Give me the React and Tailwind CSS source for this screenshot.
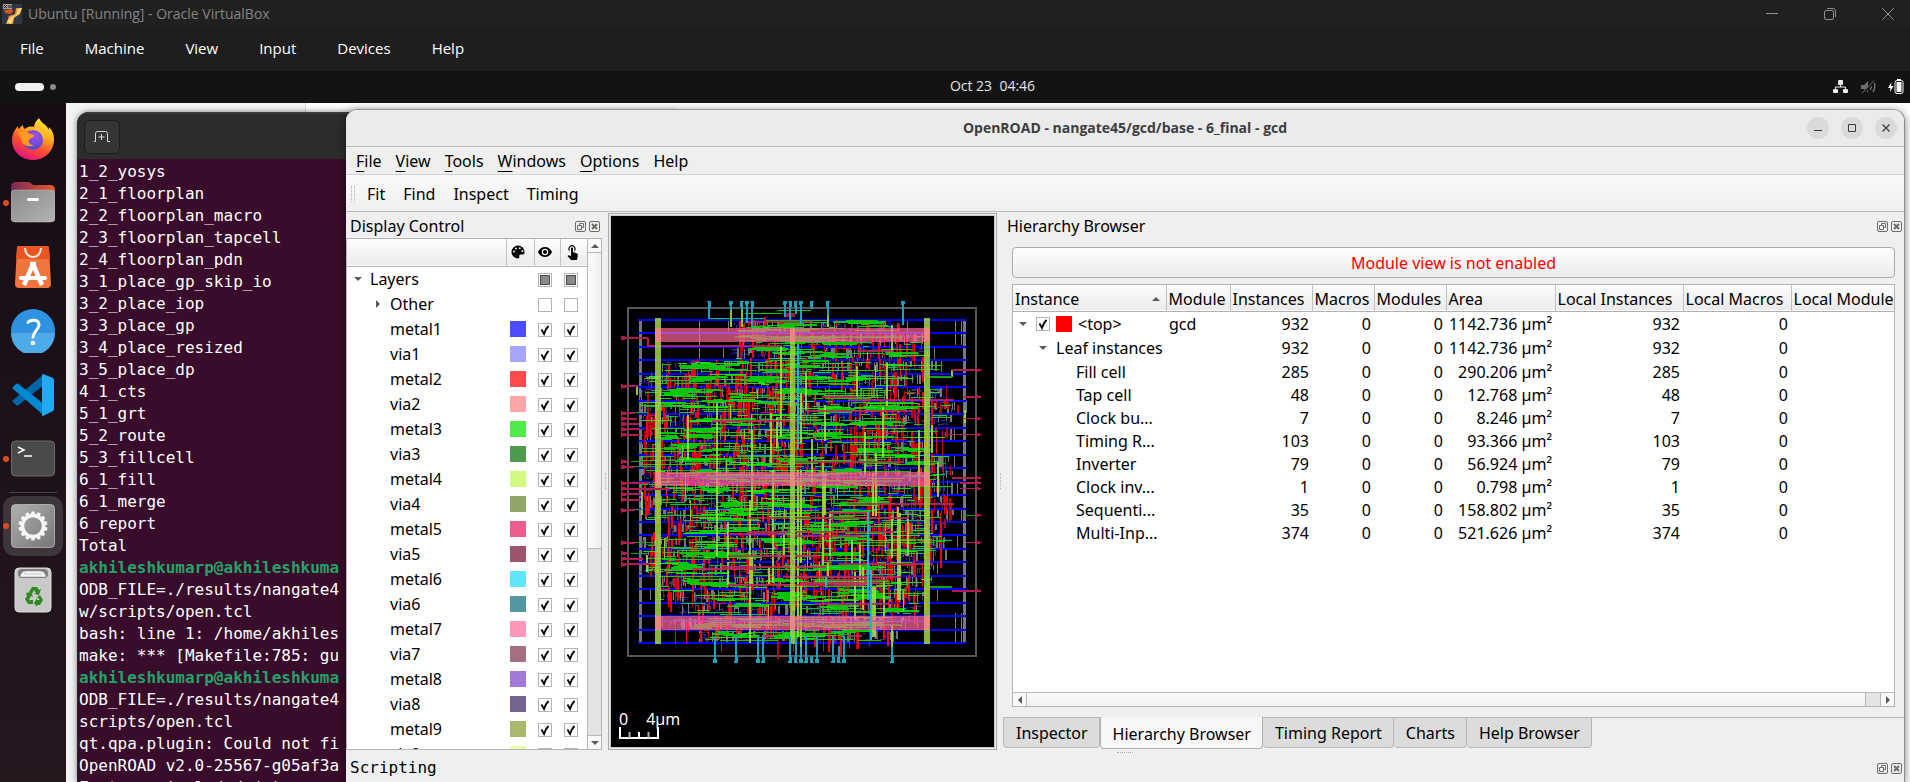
import React from "react";

const UI = "font-['Noto_Sans','Open_Sans',sans-serif]";
const MONO = "font-['DejaVu_Sans_Mono','Liberation_Mono',monospace]";

/* ---------- Chip layout drawing ---------- */

function rng(seed) {
  let a = seed;
  return () => {
    a = (a + 0x6d2b79f5) | 0;
    let t = Math.imul(a ^ (a >>> 15), 1 | a);
    t = (t + Math.imul(t ^ (t >>> 7), 61 | t)) ^ t;
    return ((t ^ (t >>> 14)) >>> 0) / 4294967296;
  };
}

const snap = (v) => Math.round(v / 3) * 3;
const box = (x, y, w, h) => `M${snap(x)} ${snap(y)}h${snap(w)}v${snap(h)}h${-snap(w)}z`;

const ROW_TOP = 327;
const ROW_STEP = 40.4;
const ROW_SPANS = [
  [400, 910], [405, 990], [385, 990], [185, 1030], [120, 960], [120, 1050], [120, 1085], [120, 1050],
  [120, 1050], [120, 1010], [120, 1050], [120, 1060], [120, 1060], [120, 1060], [120, 1070], [200, 1045],
  [120, 1060], [120, 1035], [120, 1000], [165, 1000], [165, 1000], [235, 970], [200, 940], [295, 890],
];

function buildLayers() {
  const r = rng(4510);
  const out = { navy: "", slate: "", gray: "", red: "", dimRed: "", green: "", lime: "", brightGreen: "" };
  ROW_SPANS.forEach(([a, b], i) => {
    const y = ROW_TOP + i * ROW_STEP;
    for (let k = 0; k < (b - a) / 8; k++) {
      const x = a + r() * (b - a - 20);
      const yy = y + 3 + r() * 30;
      out.navy += r() < 0.5 ? box(x, yy, 6 + r() * 18, 3) : box(x, yy, 3, 6 + r() * 15);
    }
    for (let k = 0; k < (b - a) / 9; k++) {
      const x = a + r() * (b - a - 20);
      const yy = y + 6 + r() * 26;
      out.slate += r() < 0.55 ? box(x, yy, 6 + r() * 15, 3) : box(x, yy, 3, 6 + r() * 12);
    }
    for (let k = 0; k < (b - a) / 17; k++) {
      out.gray += box(a + r() * (b - a), y + 3 + r() * 9, r() < 0.3 ? 6 : 3, 12 + r() * 24);
    }
    if (i % 2 === 0) {
      out.gray += box(b + 12, y + 3, 3, 36);
      out.gray += box(Math.max(120, a - 15), y + 3, 3, 34);
    }
    const dense = i > 2 && i < 21 ? 1 : 0.55;
    for (let k = 0; k < ((b - a) / 16) * dense; k++) {
      const x = a + 10 + r() * (b - a - 20);
      out[r() < 0.4 ? "dimRed" : "red"] += box(x, y - 8 + r() * 26, r() < 0.5 ? 6 : 3, 14 + r() * 66);
    }
    for (let k = 0; k < 3; k++) {
      out.red += box(a + r() * (b - a - 60), y + r() * 38, 12 + r() * 34, 3);
    }
    for (let k = 0; k < ((b - a) / 24) * dense; k++) {
      const w = 18 + r() * r() * 190;
      const x = a + r() * Math.max(10, b - a - w);
      out[r() < 0.7 ? "green" : "brightGreen"] += box(x, y + r() * 38, w, 3);
    }
    for (let k = 0; k < 5; k++) {
      const cx = a + 60 + r() * (b - a - 160);
      const cy = y + 4 + r() * 28;
      for (let j = 0; j < 4; j++) {
        out.green += box(cx - 35 + r() * 50, cy + (j - 1) * 3, 30 + r() * 75, r() < 0.6 ? 3 : 6);
      }
    }
    for (let k = 0; k < 3; k++) {
      const w = 80 + r() * 140;
      out.green += box(a + r() * (b - a - w), y + 6 + r() * 28, w, 3);
    }
    if (i > 1 && i < 22) {
      out.lime += box(a + 20 + r() * (b - a - 50), y + r() * 20, 3, 20 + r() * 70);
    }
  });
  return out;
}

const LAYERS = buildLayers();

const LIME_BARS = [
  [543, 408, 680], [850, 590, 740], [352, 580, 1040], [264, 615, 750], [457, 660, 900], [514, 610, 760],
  [530, 622, 715], [618, 485, 600], [772, 468, 560], [861, 460, 590], [877, 345, 425], [674, 585, 692],
  [603, 550, 700], [635, 688, 820], [795, 665, 790], [958, 660, 870], [997, 645, 728], [1013, 755, 860],
  [668, 750, 1065], [674, 790, 915], [820, 790, 920], [828, 730, 920], [520, 780, 1120], [450, 870, 1298],
  [595, 780, 1280], [691, 910, 1040], [385, 935, 1050], [553, 970, 1035], [603, 780, 1060], [756, 990, 1060],
  [781, 1000, 1130], [877, 918, 1045], [893, 890, 1170], [901, 910, 1170], [925, 925, 1040], [853, 1100, 1220],
  [765, 1085, 1230], [789, 1070, 1200], [820, 1130, 1280], [826, 1130, 1280], [683, 1060, 1100], [506, 1070, 1120],
  [385, 1055, 1125], [457, 1040, 1120], [393, 300, 350], [425, 300, 350], [683, 318, 352], [110, 530, 555],
  [126, 845, 915], [142, 1035, 1085], [1055, 480, 502], [1094, 600, 640], [877, 1245, 1310], [603, 1125, 1310],
];

const ROSE_BARS = [
  [145, 545, 408], [435, 640, 335], [770, 880, 423], [665, 770, 561], [745, 1062, 569], [618, 935, 602],
  [337, 603, 633], [563, 590, 714], [570, 910, 755], [740, 1060, 883], [680, 810, 908], [440, 925, 924],
  [440, 880, 965], [385, 560, 972], [385, 655, 1038], [715, 1000, 1062], [370, 680, 1070], [275, 465, 1077],
  [560, 780, 978], [550, 905, 1102], [680, 860, 1110], [385, 800, 1125], [600, 840, 1119], [645, 870, 1182],
  [490, 520, 1278], [740, 785, 1278],
];

const LEFT_PINS = [
  [383, 145], [528, 113], [609, 105], [625, 112], [641, 118], [657, 120], [673, 120], [754, 84], [770, 105],
  [819, 150], [835, 207], [852, 124], [868, 120], [900, 105], [997, 105], [1029, 84], [1045, 128], [1062, 148],
];
const RIGHT_PINS = [
  [480, 1055], [560, 1092], [625, 1092], [673, 1045], [803, 1055], [818, 1080], [835, 1080], [915, 1125],
  [997, 1098], [1142, 1055],
];
const TOP_PINS = [
  [328, 328], [393, 300], [425, 300], [441, 340], [457, 352], [555, 320], [571, 332], [587, 313], [603, 345],
  [635, 297], [683, 318], [909, 345],
];
const BOTTOM_PINS = [
  [345, 1278], [409, 1278], [474, 1278], [490, 1278], [571, 1278], [587, 1285], [603, 1312], [619, 1278],
  [635, 1338], [651, 1278], [700, 1278], [716, 1308], [732, 1278], [877, 1310],
];

function ChipLayout() {
  return (
    <svg
      viewBox="33 18 1149 1596"
      preserveAspectRatio="xMidYMin slice"
      shapeRendering="crispEdges"
      className="block h-full w-full"
      role="img"
      aria-label="gcd layout"
    >
      <rect x="84" y="294" width="1044" height="1044" fill="none" stroke="#585858" strokeWidth="4" />
      {[117, 1089].map((x) => (
        <path key={x} d={box(x, 330, 9, 966)} fill="#77777f" />
      ))}
      {[297, 1064, 1083].map((x, n) => (
        <path key={x} d={box(x, 333, 3, n === 0 ? 114 : 72) + box(x, 1210, 3, 86)} fill="#808080" />
      ))}
      <path d={LAYERS.navy} fill="#0a0a96" />
      <path d={LAYERS.slate} fill="#38386a" />
      <path d={LAYERS.gray} fill="#77777c" />
      {Array.from({ length: 25 }, (_, i) => (
        <path key={i} d={box(115, ROW_TOP + i * ROW_STEP, 984, 6)} fill="#0000ff" />
      ))}
      <path d={LAYERS.dimRed} fill="#b8000c" />
      <path d={LAYERS.red} fill="#f0000c" />
      <path d={LAYERS.green} fill="#05c305" />
      <path d={LAYERS.brightGreen} fill="#1fdc08" />
      <path d={box(435, 309, 110, 3) + box(535, 300, 100, 4) + box(328, 324, 165, 4) + box(700, 334, 160, 6)} fill="#00c800" />
      <path d={box(555, 309, 30, 12)} fill="#a01850" />
      <path d={LAYERS.lime} fill="#8cc83c" />
      <path d={LIME_BARS.map(([x, a, b]) => box(x - 3, a, 6, b - a)).join("")} fill="#a0e040" fillOpacity="0.88" />
      <path d={ROSE_BARS.map(([a, b, y]) => box(a, y - 3, b - a, 6)).join("")} fill="#c02858" fillOpacity="0.85" />
      <path d={box(142, 383, 5, 27)} fill="#c01858" />
      {[354, 786, 1218].map((y) => (
        <g key={y}>
          <rect x="165" y={y} width="825" height="42" fill="#ff6496" fillOpacity="0.7" />
          <rect x="165" y={y + 12} width="825" height="6" fill="#b050d0" fillOpacity="0.55" />
          <rect x="405" y={y + 24} width="500" height="5" fill="#a0a060" fillOpacity="0.55" />
        </g>
      ))}
      <path d={box(165, 324, 18, 978) + box(972, 324, 18, 978)} fill="#a4d846" fillOpacity="0.84" />
      <path d={box(570, 360, 15, 942)} fill="#a4d846" fillOpacity="0.8" />
      {[354, 786, 1218].map((y) => (
        <path key={y} d={box(165, y, 18, 42) + box(972, y, 18, 42) + box(570, y, 15, 42)} fill="#e88a80" />
      ))}
      <path
        d={box(592, 402, 7, 315) + box(802, 903, 6, 267) + box(811, 1080, 6, 210) + box(674, 1100, 6, 28)}
        fill="#22b4c8"
      />
      {TOP_PINS.map(([x, b]) => (
        <path key={x} d={`M${x - 6} 273h12l-3 21v${b - 294}h-6v${294 - b}z`} fill="#1ea0be" />
      ))}
      {BOTTOM_PINS.map(([x, a]) => (
        <path key={x} d={`M${x - 3} ${a}h6v${1338 - a}l3 20h-12l3 -20z`} fill="#1ea0be" />
      ))}
      {LEFT_PINS.map(([y, b]) => (
        <path key={y} d={`M63 ${y - 6}l18 4h${b - 81}v6h${81 - b}l-18 4z`} fill="#b01c50" />
      ))}
      {RIGHT_PINS.map(([y, a]) => (
        <path key={y} d={`M${a} ${y - 2}h${1127 - a}v-4l20 7l-20 6v-4h${a - 1127}z`} fill="#b01c50" />
      ))}
      <path d={box(105, 606, 40, 4) + box(105, 768, 60, 4) + box(93, 752, 30, 4) + box(105, 996, 60, 4) + box(93, 1028, 48, 4) + box(105, 898, 24, 4) + box(990, 498, 66, 5) + box(990, 1128, 66, 5) + box(1088, 915, 36, 4)} fill="#14a014" />
    </svg>
  );
}

/* ---------- Icons ---------- */

const FirefoxIcon = () => (
  <svg viewBox="0 0 44 44" className="size-11">
    <defs>
      <linearGradient id="ffBody" x1="0.8" y1="0" x2="0.3" y2="1">
        <stop offset="0" stopColor="#fff044" />
        <stop offset="0.35" stopColor="#ffb020" />
        <stop offset="0.65" stopColor="#ff5030" />
        <stop offset="1" stopColor="#e01080" />
      </linearGradient>
      <radialGradient id="ffCore" cx="0.6" cy="0.3" r="0.8">
        <stop offset="0" stopColor="#a050f0" />
        <stop offset="1" stopColor="#4548c8" />
      </radialGradient>
    </defs>
    <path
      d="M28 1c-3 3-5 6-5 9-4-1-7 0-9 2-2-1-2-3-2-4-2 1-3 3-4 4-1-1-1-2-1-3C3 13 1 18 1 23c0 11 9 20 21 20s21-9 21-21c0-5-2-9-5-12 0 1 0 2 0 3-2-5-8-7-10-12z"
      fill="url(#ffBody)"
    />
    <circle cx="22" cy="23" r="10" fill="url(#ffCore)" />
    <path d="M8 16c3-3 7-3 11 1 2 0 4 0 4 2-1 2-4 2-5 4-1 3 2 5 5 5-6 3-12 0-13-6-1-2-2-3-2-6z" fill="#ff9a20" />
    <path d="M23 12c5 0 9 4 10 9 1-5-2-9-5-11-2-1-4 0-5 2z" fill="#ffc22e" />
  </svg>
);

const FilesIcon = () => (
  <svg viewBox="0 0 44 44" className="size-11">
    <defs>
      <linearGradient id="fiBack" x1="0" x2="1">
        <stop offset="0" stopColor="#7a2a58" />
        <stop offset="1" stopColor="#e85a28" />
      </linearGradient>
      <linearGradient id="fiFront" x1="0" y1="0" x2="1" y2="1">
        <stop offset="0" stopColor="#8a8a8a" />
        <stop offset="1" stopColor="#b4b4b4" />
      </linearGradient>
    </defs>
    <path d="M0 14V6q0-5 5-5h12q2 0 4 2l1 1h17q5 0 5 5v8z" fill="url(#fiBack)" />
    <rect x="0" y="9" width="44" height="32" rx="4" fill="url(#fiFront)" stroke="#c0c0c0" strokeOpacity="0.5" />
    <rect x="16" y="17" width="12" height="3" rx="1.5" fill="#fff" />
  </svg>
);

const SoftwareIcon = () => (
  <svg viewBox="0 0 44 44" className="size-11">
    <path d="M8 1h28q2 0 2 2l2 36q0 4-4 4H8q-4 0-4-4L6 3q0-2 2-2z" fill="#f0743e" />
    <path d="M8 1h28q2 0 2 2l1 11H5L6 3q0-2 2-2z" fill="#e95420" />
    <path d="M14 3c0 12 16 12 16 0" fill="none" stroke="#fbe9e0" strokeWidth="2" />
    <path d="M22 19L13 40M22 19l9 21M19 19h6" fill="none" stroke="#fff" strokeWidth="4.500" />
    <path d="M10 33h24" stroke="#fff" strokeWidth="4" strokeLinecap="round" />
  </svg>
);

const HelpIcon = () => (
  <svg viewBox="0 0 44 44" className="size-11">
    <circle cx="22" cy="22" r="22" fill="#2f92e0" />
    <path d="M0 24h44a22 22 0 0 1-44 0z" fill="#4fabe8" />
    <path d="M17 13.500c2-3 11-4 11 2.500 0 5-6 6-6 12" fill="none" stroke="#fff" strokeWidth="3" strokeLinecap="round" />
    <circle cx="22" cy="34" r="2.300" fill="#fff" />
  </svg>
);

const CodeIcon = () => (
  <svg viewBox="0 0 44 44" className="size-11">
    <path d="M1 28l4 4q1 1 2.500 0L33 12V1L1 28z" fill="#0065a9" />
    <path d="M1 15l4-4q1-1 2.500 0L33 31v11.500L1 15z" fill="#0088d4" />
    <path d="M32 1l10 4q1 1 1 2v29q0 1-1 2l-10 5q-1 0-1-1V2z" fill="#24a8f4" />
  </svg>
);

const TerminalIcon = () => (
  <svg viewBox="0 0 44 44" className="size-11">
    <rect x="0.500" y="4" width="43" height="35" rx="4" fill="#4a4a4a" stroke="#6a6a6a" />
    <path d="M7 10l6 3-6 3M13 19h8" fill="none" stroke="#fff" strokeWidth="1.500" />
  </svg>
);

const SettingsIcon = () => (
  <svg viewBox="0 0 44 44" className="size-11">
    <defs>
      <linearGradient id="seBg" x1="0" y1="0" x2="1" y2="1">
        <stop offset="0" stopColor="#b0b0b0" />
        <stop offset="1" stopColor="#757575" />
      </linearGradient>
    </defs>
    <rect x="0.500" y="0.500" width="43" height="43" rx="4" fill="url(#seBg)" stroke="#c8c8c8" strokeOpacity="0.7" />
    <circle cx="22" cy="22" r="10.500" fill="none" stroke="#f6f6f6" strokeWidth="3.500" />
    {Array.from({ length: 14 }, (_, i) => (
      <path key={i} d="M20.500 7.500h3l1 4h-5z" fill="#f6f6f6" transform={`rotate(${(i * 360) / 14} 22 22)`} />
    ))}
  </svg>
);

const TrashIcon = () => (
  <svg viewBox="0 0 44 46" className="h-[46px] w-11">
    <rect x="4" y="1" width="36" height="44" rx="4" fill="#c9c9c9" stroke="#dcdcdc" />
    <rect x="7" y="2" width="30" height="9" rx="4" fill="#7d7d7d" />
    <path d="M9 10q1-6 6-6h14q5 0 6 6z" fill="#f4f4f4" stroke="#9a9a9a" strokeWidth="0.600" />
    <path d="M13 7h18" stroke="#aaa" strokeWidth="0.600" />
    <g fill="#2d8a1e">
      <path d="M18 25l3-5h5l2 3 2-1-2 6-5-1 2-1-2-3-2 4z" />
      <path d="M15 26l5-1 2 5-2-1-2 4h4v4h-5l-3-5 2-3z" />
      <path d="M29 28l3 5-3 5h-3v2l-3-4 3-5v2h3l-3-3z" />
    </g>
  </svg>
);

const NewTabIcon = () => (
  <svg viewBox="0 0 16 13" className="h-[13px] w-4" fill="none" stroke="#d8d8d8">
    <path d="M0 11.500h1.500V3.500q0-2 2-2h8q2 0 2 2v8H16M7.500 4v6M4.500 7h6" />
  </svg>
);

const FloatIcon = () => (
  <svg viewBox="0 0 11 11" className="size-[11px]" fill="none" stroke="#6c6c68">
    <rect x="0.500" y="0.500" width="10" height="10" rx="1.500" />
    <path d="M4.500 4V2.500h4v4H7M2.500 4.500h4v4h-4z" />
  </svg>
);

const CloseDockIcon = () => (
  <svg viewBox="0 0 11 11" className="size-[11px]" fill="none" stroke="#6c6c68">
    <rect x="0.500" y="0.500" width="10" height="10" rx="1.500" />
    <path d="M3 3l5 5M8 3l-5 5" strokeWidth="2" />
  </svg>
);

const Arrow = ({ dir }) => {
  const d = { down: "M0 2h8l-4 4z", up: "M0 6h8l-4-4z", left: "M6 0v8l-4-4z", right: "M2 0v8l4-4z" }[dir];
  return (
    <svg viewBox="0 0 8 8" className="size-2" fill="#5a5a5a">
      <path d={d} />
    </svg>
  );
};

/* ---------- Small controls ---------- */

function Check({ label, state = "on" }) {
  return (
    <span className="relative inline-grid size-3.5 place-items-center align-middle">
      <input
        type="checkbox"
        aria-label={label}
        defaultChecked={state === "on"}
        className="peer absolute inset-0 m-0 size-3.5 appearance-none border border-[#b4b4b4] bg-white"
      />
      {state === "partial" ? (
        <span className="pointer-events-none relative size-2.5 border border-[#4a4a4a] bg-[#8a8a8a]" />
      ) : (
        <svg
          viewBox="0 0 14 14"
          className="pointer-events-none invisible relative size-3.5 peer-checked:visible"
          fill="none"
          stroke="#000"
          strokeWidth="1.800"
        >
          <path d="M3.500 6.500l2.500 4.500q1.500-5 4.500-8" />
        </svg>
      )}
    </span>
  );
}

function DockTitle({ children }) {
  return (
    <div className="flex h-[26px] items-center justify-between pt-0.5 pr-0.5 pl-1">
      <h2>{children}</h2>
      <div className="flex gap-[3px]">
        <button type="button" aria-label="Float panel"><FloatIcon /></button>
        <button type="button" aria-label="Close panel"><CloseDockIcon /></button>
      </div>
    </div>
  );
}

const LayerRows = [
  ["metal1", "bg-[#4b4bff]"], ["via1", "bg-[#a5a5ff]"], ["metal2", "bg-[#ff4b4b]"], ["via2", "bg-[#ffa5a5]"],
  ["metal3", "bg-[#50eb4b]"], ["via3", "bg-[#4f9b4e]"], ["metal4", "bg-[#d2fa82]"], ["via4", "bg-[#90a466]"],
  ["metal5", "bg-[#e9608f]"], ["via5", "bg-[#9b566b]"], ["metal6", "bg-[#62e4ff]"], ["via6", "bg-[#5596a2]"],
  ["metal7", "bg-[#ff96bb]"], ["via7", "bg-[#a47080]"], ["metal8", "bg-[#a078d7]"], ["via8", "bg-[#756491]"],
  ["metal9", "bg-[#a7b96e]"], ["via9", "bg-[#e8ffaa]"],
];

function DisplayControl() {
  return (
    <section className="flex w-64 shrink-0 flex-col">
      <DockTitle>Display Control</DockTitle>
      <div className="flex min-h-0 flex-1 overflow-hidden border border-[#b4b4b4] bg-white">
        <div className="min-h-0 flex-1 overflow-hidden">
          <table className="w-full table-fixed border-collapse">
            <colgroup>
              <col />
              <col className="w-7" />
              <col className="w-[26px]" />
              <col className="w-[27px]" />
            </colgroup>
            <thead>
              <tr className="h-[27px] border-b border-[#b0b0b0] bg-linear-to-b from-[#fdfdfd] to-[#ebebeb]">
                <th scope="col" aria-label="Name" />
                <th scope="col" aria-label="Color" className="border-l border-[#c4c4c4]">
                  <svg viewBox="0 0 14 14" className="mx-auto block size-3.5 -translate-x-0.5">
                    <path d="M7 0.500a6.500 6.500 0 1 0 0 13c1.200 0 1.600-.8 1.300-1.700-.5-1.300.2-2.300 1.600-2.300H12c1 0 1.600-.8 1.600-2C13.600 3.500 10.600.5 7 .5z" />
                    <g fill="#f4f4f4"><circle cx="3" cy="6.500" r="1" /><circle cx="5" cy="3.500" r="1" /><circle cx="8.800" cy="3.300" r="1" /><circle cx="11.300" cy="6" r="1" /></g>
                  </svg>
                </th>
                <th scope="col" aria-label="Visible" className="border-l border-[#c4c4c4]">
                  <svg viewBox="0 0 14 10" className="mx-auto block h-2.5 w-3.5 -translate-x-0.5">
                    <path d="M7 0C3.800 0 1.200 2 0 5c1.200 3 3.800 5 7 5s5.800-2 7-5c-1.200-3-3.800-5-7-5z" />
                    <circle cx="7" cy="5" r="3.300" fill="#f4f4f4" /><circle cx="7" cy="5" r="2" />
                  </svg>
                </th>
                <th scope="col" aria-label="Selectable" className="border-l border-[#c4c4c4]">
                  <svg viewBox="0 0 12 15" className="mx-auto block h-[15px] w-3 -translate-x-0.5">
                    <path d="M5 6V3.500q0-1 1-1t1 1V7l4 1.500q1 .4.800 1.500L11 15H5L1.500 11l.8-.8L5 11z" />
                    <path d="M3.500 5.500a3 3 0 1 1 5 0" fill="none" stroke="#000" strokeWidth="1.200" />
                  </svg>
                </th>
              </tr>
            </thead>
            <tbody>
              <tr className="h-[25px]">
                <th scope="row" className="p-0 font-normal">
                  <span className="flex items-center gap-2 pl-[7px]"><Arrow dir="down" />Layers</span>
                </th>
                <td />
                <td className="p-0 pl-1 leading-none"><Check label="Layers visible" state="partial" /></td>
                <td className="p-0 pl-1 leading-none"><Check label="Layers selectable" state="partial" /></td>
              </tr>
              <tr className="h-[25px]">
                <th scope="row" className="p-0 font-normal">
                  <span className="flex items-center gap-2 pl-[27px]"><Arrow dir="right" />Other</span>
                </th>
                <td />
                <td className="p-0 pl-1 leading-none"><Check label="Other visible" state="off" /></td>
                <td className="p-0 pl-1 leading-none"><Check label="Other selectable" state="off" /></td>
              </tr>
              {LayerRows.map(([name, color]) => (
                <tr key={name} className="h-[25px]">
                  <th scope="row" className="p-0 pl-[43px] text-left font-normal">{name}</th>
                  <td className="p-0 pl-1"><span className={`block size-4 ${color}`} /></td>
                  <td className="p-0 pl-1 leading-none"><Check label={`${name} visible`} /></td>
                  <td className="p-0 pl-1 leading-none"><Check label={`${name} selectable`} /></td>
                </tr>
              ))}
            </tbody>
          </table>
        </div>
        <div className="flex w-3.5 flex-col border-l border-[#b8b8b8] bg-[#e4e4e4]">
          <button type="button" aria-label="Scroll up" className="grid h-3.5 shrink-0 place-items-center border-b border-[#b8b8b8] bg-[#f8f8f8]"><Arrow dir="up" /></button>
          <div className="h-[58%] border-b border-[#b8b8b8] bg-linear-to-r from-[#fcfcfc] to-[#f0f0f0]" />
          <div className="flex-1" />
          <button type="button" aria-label="Scroll down" className="grid h-3.5 shrink-0 place-items-center border-t border-[#b8b8b8] bg-[#f8f8f8]"><Arrow dir="down" /></button>
        </div>
      </div>
    </section>
  );
}

const Columns = ["Instance", "Module", "Instances", "Macros", "Modules", "Area", "Local Instances", "Local Macros", "Local Modules"];
const LeafRows = [
  ["Fill cell", 285, "290.206"], ["Tap cell", 48, "12.768"], ["Clock bu...", 7, "8.246"], ["Timing R...", 103, "93.366"],
  ["Inverter", 79, "56.924"], ["Clock inv...", 1, "0.798"], ["Sequenti...", 35, "158.802"], ["Multi-Inp...", 374, "521.626"],
];

function Numbers({ count, area }) {
  return (
    <>
      {[count, 0, 0, `${area} µm²`, count, 0].map((v, i) => (
        <td key={i} className="p-0 pr-[3px] text-right whitespace-nowrap">{v}</td>
      ))}
      <td />
    </>
  );
}

function HierarchyBrowser() {
  return (
    <section className="flex min-w-0 flex-1 flex-col">
      <DockTitle>Hierarchy Browser</DockTitle>
      <div className="flex min-h-0 flex-1 flex-col gap-1.5 px-[9px] pt-[9px] pb-2.5">
        <button type="button" className="h-[31px] shrink-0 rounded-sm border border-[#adadad] bg-linear-to-b from-[#fefefe] to-[#ebebeb] text-[#ff0000]">
          Module view is not enabled
        </button>
        <div className="flex min-h-0 flex-1 flex-col overflow-hidden border border-[#b4b4b4] bg-white">
          <div className="min-h-0 flex-1 overflow-hidden">
            <table className="w-[898px] min-w-full table-fixed border-collapse">
              <colgroup>
                <col className="w-[153px]" />
                <col className="w-16" />
                <col className="w-[82px]" />
                <col className="w-[62px]" />
                <col className="w-[72px]" />
                <col className="w-[109px]" />
                <col className="w-32" />
                <col className="w-[108px]" />
                <col className="w-[120px]" />
              </colgroup>
              <thead>
                <tr className="h-[26px] border-b border-[#b0b0b0] bg-linear-to-b from-[#fdfdfd] to-[#ebebeb]">
                  {Columns.map((c, i) => (
                    <th key={c} scope="col" className="border-r border-[#c0c0c0] p-0 pt-0.5 pl-0.5 text-left font-normal whitespace-nowrap">
                      {i === 0 ? <span className="flex items-center justify-between pr-1.5">{c}<Arrow dir="up" /></span> : c}
                    </th>
                  ))}
                </tr>
              </thead>
              <tbody>
                <tr className="h-[25px]">
                  <th scope="row" className="p-0 font-normal">
                    <span className="flex items-center pl-1.5">
                      <Arrow dir="down" />
                      <label className="ml-[9px] flex items-center gap-1.5">
                        <Check label="<top>" />
                        <span className="size-4 bg-[#ff0000]" />
                        {"<top>"}
                      </label>
                    </span>
                  </th>
                  <td className="p-0 pl-[3px]">gcd</td>
                  <Numbers count={932} area="1142.736" />
                </tr>
                <tr className="h-6">
                  <th scope="row" className="p-0 font-normal whitespace-nowrap">
                    <span className="flex items-center gap-[9px] pl-[26px]"><Arrow dir="down" />Leaf instances</span>
                  </th>
                  <td />
                  <Numbers count={932} area="1142.736" />
                </tr>
                {LeafRows.map(([name, count, area]) => (
                  <tr key={name} className="h-[23px]">
                    <th scope="row" className="p-0 pl-[63px] text-left font-normal whitespace-nowrap">{name}</th>
                    <td />
                    <Numbers count={count} area={area} />
                  </tr>
                ))}
              </tbody>
            </table>
          </div>
          <div className="flex h-3.5 shrink-0 border-t border-[#b8b8b8] bg-[#e4e4e4]">
            <button type="button" aria-label="Scroll left" className="grid w-3.5 place-items-center border-r border-[#b8b8b8] bg-[#f8f8f8]"><Arrow dir="left" /></button>
            <div className="mr-3.5 flex-1 border-r border-[#b8b8b8] bg-linear-to-b from-[#fcfcfc] to-[#f0f0f0]" />
            <button type="button" aria-label="Scroll right" className="grid w-3.5 place-items-center border-l border-[#b8b8b8] bg-[#f8f8f8]"><Arrow dir="right" /></button>
          </div>
        </div>
      </div>
      <div className="flex h-[33px] shrink-0 items-start">
        {["Inspector", "Hierarchy Browser", "Timing Report", "Charts", "Help Browser"].map((t) =>
          t === "Hierarchy Browser" ? (
            <button key={t} type="button" className="h-8 rounded-b-sm border border-t-0 border-[#b0b0b0] bg-[#f7f7f7] pt-0.5 pr-[11px] pl-3">{t}</button>
          ) : (
            <button key={t} type="button" className="h-[31px] rounded-b-sm border border-l-0 border-[#b8b8b8] bg-[#dcdcdc] pr-[11px] pl-3 first:border-l">{t}</button>
          )
        )}
        <div className="flex-1 border-t border-[#b8b8b8]" />
      </div>
    </section>
  );
}

const Grip = ({ className }) => <span className={`block border-[#b0b0b0] ${className}`} />;

function OpenRoadWindow() {
  return (
    <div className={`absolute top-1.5 right-[5px] bottom-0 left-[280px] flex flex-col overflow-hidden rounded-t-xl border-t border-r border-t-[#9a9a9a] border-r-[#8c8c8c] bg-[#efefef] text-base leading-[22px] text-black shadow-[0_2px_10px_rgba(0,0,0,0.5)] ${UI}`}>
      <div className="grid h-[37px] shrink-0 grid-cols-[1fr_auto_1fr] items-center border-b border-[#bcbcbc] bg-[#ebebeb]">
        <span />
        <h1 className="font-['Open_Sans','Noto_Sans',sans-serif] text-sm font-bold text-[#3d3d3d]">OpenROAD - nangate45/gcd/base - 6_final - gcd</h1>
        <div className="flex justify-end gap-3 pr-[7px]">
          <button type="button" aria-label="Minimize" className="grid size-[22px] place-items-center rounded-full bg-[#dadada]">
            <svg viewBox="0 0 8 8" className="size-2" stroke="#3d3d3d" fill="none"><path d="M0 6.500h8" /></svg>
          </button>
          <button type="button" aria-label="Maximize" className="grid size-[22px] place-items-center rounded-full bg-[#dadada]">
            <svg viewBox="0 0 8 8" className="size-2" stroke="#3d3d3d" fill="none"><path d="M.5.5h7v7h-7z" /></svg>
          </button>
          <button type="button" aria-label="Close" className="grid size-[22px] place-items-center rounded-full bg-[#dadada]">
            <svg viewBox="0 0 8 8" className="size-2" stroke="#3d3d3d" strokeWidth="1.300" fill="none"><path d="M.5.5l7 7M7.500.5l-7 7" /></svg>
          </button>
        </div>
      </div>
      <nav className="flex h-7 shrink-0 items-center gap-[14px] border-b border-[#d2d2d2] px-2.5">
        {["File", "View", "Tools", "Windows", "Options", "Help"].map((m) => (
          <button key={m} type="button">
            {m === "Help" ? m : <><span className="underline underline-offset-4">{m[0]}</span>{m.slice(1)}</>}
          </button>
        ))}
      </nav>
      <div className="flex h-[37px] shrink-0 items-center gap-[18px] border-b border-[#b8b8b8] bg-linear-to-b from-[#fafafa] to-[#efefef] pt-0.5 pl-[5px]">
        <Grip className="-mr-1.5 h-4 w-1 border-x border-dotted" />
        {["Fit", "Find", "Inspect", "Timing"].map((m) => (
          <button key={m} type="button">{m}</button>
        ))}
      </div>
      <div className="flex min-h-0 flex-1">
        <DisplayControl />
        <div className="grid w-1.5 shrink-0 place-items-center"><Grip className="h-4 w-px border-l border-dotted" /></div>
        <div className="relative mt-px w-[389px] shrink-0 border border-[#a8a8a8] bg-[#efefef] p-px">
          <div className="relative h-full border border-[#c8c8c8] bg-black">
            <div className="absolute inset-0"><ChipLayout /></div>
            <div className="absolute bottom-2 left-2 text-white">
              <div className="flex gap-[18px] leading-4"><span>0</span><span>4µm</span></div>
              <svg viewBox="0 0 40 12" className="block h-3 w-10" fill="none" stroke="#fff" strokeWidth="2">
                <path d="M1 0v11h38V0M20 5v6" />
                <path d="M10.500 5v6M29.500 5v6" stroke="#b0b0b0" />
              </svg>
            </div>
          </div>
        </div>
        <div className="grid w-1.5 shrink-0 place-items-center"><Grip className="h-4 w-px border-l border-dotted" /></div>
        <HierarchyBrowser />
      </div>
      <div className="grid h-1 shrink-0 place-items-center"><Grip className="h-px w-4 border-t border-dotted" /></div>
      <div className={`h-7 shrink-0 ${MONO}`}>
        <DockTitle>Scripting</DockTitle>
      </div>
    </div>
  );
}

const Prompt = "akhileshkumarp@akhileshkuma";
const TermLines = [
  "1_2_yosys", "2_1_floorplan", "2_2_floorplan_macro", "2_3_floorplan_tapcell", "2_4_floorplan_pdn",
  "3_1_place_gp_skip_io", "3_2_place_iop", "3_3_place_gp", "3_4_place_resized", "3_5_place_dp", "4_1_cts",
  "5_1_grt", "5_2_route", "5_3_fillcell", "6_1_fill", "6_1_merge", "6_report", "Total", Prompt,
  "ODB_FILE=./results/nangate4", "w/scripts/open.tcl", "bash: line 1: /home/akhiles", "make: *** [Makefile:785: gu",
  Prompt, "ODB_FILE=./results/nangate4", "scripts/open.tcl", "qt.qpa.plugin: Could not fi",
  "OpenROAD v2.0-25567-g05af3a", "Features included (+)",
];

function TerminalWindow() {
  return (
    <div className="absolute top-[9px] bottom-0 left-[11px] flex w-[600px] flex-col overflow-hidden rounded-tl-xl bg-[#380c2a] shadow-[0_0_6px_rgba(0,0,0,0.5)]">
      <div className="flex h-[47px] shrink-0 items-center border-t-2 border-[#3a3a3a] bg-[#2c2c2c] pl-[7px]">
        <button type="button" aria-label="New tab" className="grid h-[34px] w-9 place-items-center rounded-md border border-[#1c1c1c] bg-[#353535]"><NewTabIcon /></button>
      </div>
      <div className={`flex-1 overflow-hidden border-l border-[#2a2028] pt-0.5 pl-px text-base leading-[22px] whitespace-pre text-white ${MONO}`}>
        {TermLines.map((l, i) => (
          <div key={i} className={l === Prompt ? "font-bold text-[#26a269]" : ""}>{l}</div>
        ))}
      </div>
    </div>
  );
}

const DockItems = [
  ["Firefox", FirefoxIcon, false], ["Files", FilesIcon, true], ["App Center", SoftwareIcon, false],
  ["Help", HelpIcon, false], ["Visual Studio Code", CodeIcon, false], ["Terminal", TerminalIcon, true],
];

function DockButton({ name, Icon, running, active }) {
  return (
    <button type="button" aria-label={name} className="relative grid h-16 w-full shrink-0 place-items-center">
      {active && <span className="absolute inset-x-[3px] inset-y-0.5 rounded-xl bg-[#3d363d]" />}
      {running && <span className="absolute top-[29px] left-[3px] size-1.5 rounded-full bg-[#dc4a1c]" />}
      <span className="relative"><Icon /></span>
    </button>
  );
}

export default function App() {
  return (
    <div className="flex h-screen flex-col overflow-hidden bg-[#202020]">
      <header className="shrink-0 bg-[#202020] font-['Open_Sans','Noto_Sans',sans-serif]">
        <div className="flex h-7 items-center justify-between pr-4 pl-0.5">
          <div className="flex items-center gap-1.5">
            <svg viewBox="0 0 20 20" className="size-5">
              <rect width="20" height="20" fill="#2e3648" />
              <path d="M4 20l3-8 6-2 1-6h6l-2 6-6 4-1 6z" fill="#f59a2c" />
              <path d="M5 18l4-5 5-2 2-6 4-1-3 6-5 3-3 7z" fill="#ffd98a" />
              <path d="M2 6l8-1 1 3-3 2-5-1z" fill="#d8541c" />
              <path d="M1 0h9v5H1z" fill="#9a9a9a" />
              <path d="M2 1l3 3M5 1L2 4M7 1v3M9 1v3" stroke="#222" />
            </svg>
            <span className="text-sm text-[#848484]">Ubuntu [Running] - Oracle VirtualBox</span>
          </div>
          <div className="flex items-center gap-[46px]">
            <button type="button" aria-label="Minimize window"><svg viewBox="0 0 12 12" className="size-3" stroke="#8c8c8c" fill="none"><path d="M0 5.500h12" /></svg></button>
            <button type="button" aria-label="Restore window"><svg viewBox="0 0 12 12" className="size-3" stroke="#8c8c8c" fill="none"><rect x=".5" y="2.500" width="9" height="9" rx="1.500" /><path d="M3 .5h6q2.500 0 2.500 2.500v6" /></svg></button>
            <button type="button" aria-label="Close window"><svg viewBox="0 0 12 12" className="size-3" stroke="#8c8c8c" fill="none"><path d="M0 0l12 12M12 0L0 12" /></svg></button>
          </div>
        </div>
        <nav className="flex h-[43px] items-center gap-[41px] bg-[#1e1e1e] px-5 pb-0.5 text-[15px] text-white">
          {["File", "Machine", "View", "Input", "Devices", "Help"].map((m) => (
            <button key={m} type="button">{m}</button>
          ))}
        </nav>
      </header>

      <div className="grid h-8 shrink-0 grid-cols-[1fr_auto_1fr] items-center bg-[#131313] pr-1.5 pl-[15px] text-[#e4e4e4]">
        <div className="flex items-center gap-1.5">
          <span className="h-2 w-[29px] rounded-full bg-[#f2f2f2]" />
          <span className="size-1.5 rounded-full bg-[#8a8a8a]" />
        </div>
        <time className="pb-0.5 pl-[66px] font-['Open_Sans','Noto_Sans',sans-serif] text-sm whitespace-pre">Oct 23  04:46</time>
        <div className="flex items-center justify-end gap-3">
          <svg viewBox="0 0 16 14" className="h-3.5 w-4" fill="#f2f2f2">
            <rect x="5" y="0" width="5" height="5" rx="1" /><rect x="0" y="9" width="5" height="4" rx="1" /><rect x="10" y="9" width="5" height="4" rx="1" />
            <path d="M7.500 4v3M2.500 10V7h10v3" fill="none" stroke="#f2f2f2" />
          </svg>
          <svg viewBox="0 0 15 14" className="h-3.5 w-[15px]" fill="#6e6e6e">
            <path d="M0 5h3l4-4v12L3 9H0z" />
            <path d="M9 10q2-3 1-6M12 12q3-5 1-10" fill="none" stroke="#6e6e6e" strokeWidth="1.500" />
            <path d="M2 13.500L14 .5" stroke="#131313" strokeWidth="2.500" /><path d="M1 13.500L13 .5" stroke="#6e6e6e" />
          </svg>
          <svg viewBox="0 0 16 16" className="size-4" fill="#fff">
            <path d="M3.500 3L0 9h2.500L2 13l3.500-6H3z" />
            <rect x="7" y="1.500" width="8" height="13" rx="2" fill="none" stroke="#fff" /><rect x="8.500" y="3" width="5" height="10" /><rect x="9" y="0" width="4" height="1.500" />
          </svg>
        </div>
      </div>

      <main className="flex min-h-0 flex-1">
        <aside className="flex w-[66px] shrink-0 flex-col items-center bg-linear-to-b from-[#160d14] to-[#26171f] pt-1">
          {DockItems.map(([name, Icon, running]) => (
            <DockButton key={name} name={name} Icon={Icon} running={running} />
          ))}
          <hr className="my-px h-px w-12 shrink-0 border-0 bg-[#4a444a]" />
          <DockButton name="Settings" Icon={SettingsIcon} running active />
          <DockButton name="Trash" Icon={TrashIcon} />
        </aside>
        <div className="relative min-w-0 flex-1 overflow-hidden bg-white">
          <div className="h-full w-60 border-r border-[#d8d8d8] bg-[#f3f3f3]" />
          <TerminalWindow />
          <OpenRoadWindow />
        </div>
      </main>
    </div>
  );
}
